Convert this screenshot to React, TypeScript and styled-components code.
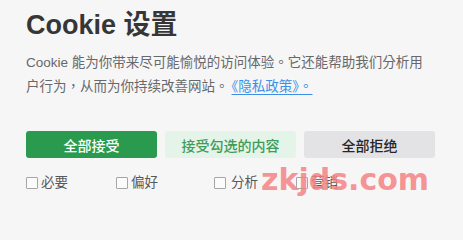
import styled, { createGlobalStyle } from "styled-components"

const GlobalStyle = createGlobalStyle`
html, body {
    margin: 0;
    padding: 0;
    background: #f6f6f7;
}
body {
    font-family: "Liberation Sans", "Noto Sans CJK SC", sans-serif;
}
`

const Panel = styled.div`
position: relative;
width: 463px;
height: 211px;
box-sizing: border-box;
padding: 7px 0 0 26px;
overflow: hidden;
`
const Title = styled.h1`
margin: 0;
font-size: 27px;
font-weight: 700;
line-height: 36px;
color: #363636;
`
const Intro = styled.p`
margin: 8px 0 0 0;
width: 405px;
font-family: "Liberation Sans", "Noto Sans CJK TC", sans-serif;
font-size: 13.5px;
line-height: 24px;
color: #68686a;
`
const PolicyLink = styled.a`
color: #3d8fe6;
text-decoration: underline;
text-underline-offset: 3px;
padding-left: 3px;
`
const ButtonRow = styled.div`
display: flex;
gap: 8px;
margin-top: 32px;
`
const Button = styled.button<{ $variant: "primary" | "soft" | "grey" }>`
width: 131px;
height: 27px;
border: none;
border-radius: 3px;
font-family: inherit;
font-size: 14px;
font-weight: 500;
cursor: pointer;
background: ${p => p.$variant === "primary" ? "#2a9b4e" : p.$variant === "soft" ? "#e5f4e8" : "#e3e3e5"};
color: ${p => p.$variant === "primary" ? "#ffffff" : p.$variant === "soft" ? "#3f9c5b" : "#262626"};
`
const OptionRow = styled.div`
display: flex;
margin-top: 16px;
`
const Option = styled.label<{ $width: number; $gap: number }>`
display: flex;
align-items: center;
gap: ${p => p.$gap}px;
width: ${p => p.$width}px;
font-size: 13.5px;
line-height: 18px;
color: #58585a;
`
const Box = styled.span`
width: 10px;
height: 10px;
border: 1px solid #a6a6a8;
border-radius: 1px;
background: #fbfbfb;
`
const Watermark = styled.div`
position: absolute;
left: 261px;
top: 165px;
font-family: "DejaVu Sans", sans-serif;
font-size: 30px;
font-weight: 700;
line-height: 30px;
color: rgba(244, 130, 130, 0.85);
pointer-events: none;
`

const options = [
    { label: "必要", width: 90, gap: 3 },
    { label: "偏好", width: 98, gap: 3 },
    { label: "分析", width: 82, gap: 5 },
    { label: "营销", width: 60, gap: 3 },
]

const App = () => {
    return (
        <>
            <GlobalStyle />
            <Panel>
                <Title>Cookie 设置</Title>
                <Intro lang="zh-Hant-TW">
                    Cookie 能为你带来尽可能愉悦的访问体验。它还能帮助我们分析用户行为，从而为你持续改善网站。
                    <PolicyLink href="#">《隐私政策》。</PolicyLink>
                </Intro>
                <ButtonRow>
                    <Button $variant="primary">全部接受</Button>
                    <Button $variant="soft">接受勾选的内容</Button>
                    <Button $variant="grey">全部拒绝</Button>
                </ButtonRow>
                <OptionRow>
                    {options.map(o =>
                        <Option key={o.label} $width={o.width} $gap={o.gap}>
                            <Box />
                            {o.label}
                        </Option>
                    )}
                </OptionRow>
                <Watermark>zkjds.com</Watermark>
            </Panel>
        </>
    )
}

export default App
